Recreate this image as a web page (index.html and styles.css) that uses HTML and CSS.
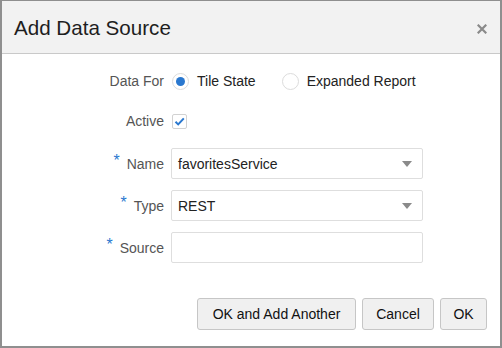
FILE: index.html
```html
<!DOCTYPE html>
<html lang="en">
<head>
    <meta charset="UTF-8">
    <title>Add Data Source</title>
    <link rel="stylesheet" href="styles.css">
</head>
<body>
    <div class="dialog">
        <div class="dialog-header">
            <h1>Add Data Source</h1>
            <span class="close-btn">
                <svg width="10" height="10" viewBox="0 0 10 10"><path d="M1.5 1.5 L8.5 8.5 M8.5 1.5 L1.5 8.5" stroke="#8a8a8a" stroke-width="2.2" stroke-linecap="square"/></svg>
            </span>
        </div>

        <div class="dialog-body">
            <div class="form">
                <label class="label">Data For</label>
                <div class="radios">
                    <span class="radio checked"></span>
                    <span class="value">Tile State</span>
                    <span class="radio second"></span>
                    <span class="value">Expanded Report</span>
                </div>

                <label class="label active-label">Active</label>
                <div class="control">
                    <span class="checkbox">
                        <svg width="13" height="13" viewBox="0 0 13 13"><path d="M2.5 6.8 L5.2 9.4 L10.8 3.4" fill="none" stroke="#2a78cf" stroke-width="2"/></svg>
                    </span>
                </div>

                <label class="label"><span class="req">*</span> Name</label>
                <div class="field select">favoritesService<span class="caret"></span></div>

                <label class="label"><span class="req">*</span> Type</label>
                <div class="field select">REST<span class="caret"></span></div>

                <label class="label"><span class="req">*</span> Source</label>
                <div class="field"></div>
            </div>
        </div>

        <div class="dialog-footer">
            <button class="btn wide">OK and Add Another</button>
            <button class="btn cancel">Cancel</button>
            <button class="btn ok">OK</button>
        </div>
    </div>
</body>
</html>
```

FILE: styles.css
```css
html, body {
    margin: 0;
    padding: 0;
}
body {
    font-family: "Liberation Sans", Arial, sans-serif;
    font-size: 14px;
    color: #333;
    background: #fff;
}
.dialog {
    box-sizing: border-box;
    width: 502px;
    height: 348px;
    border: 2px solid #8f8f8f;
    border-top-width: 1px;
    display: flex;
    flex-direction: column;
    background: #fff;
}
.dialog-header {
    height: 52px;
    background: #f2f2f2;
    border-bottom: 1px solid #c9c9c9;
    display: flex;
    align-items: center;
    justify-content: space-between;
    padding: 0 13px 0 12px;
}
.dialog-header h1 {
    margin: 0;
    margin-top: 2px;
    font-size: 20.6px;
    font-weight: normal;
    color: #1e1e1e;
}
.close-btn {
    display: flex;
    margin-top: 3px;
}
.dialog-body {
    padding-top: 12px;
}
.form {
    display: grid;
    grid-template-columns: 162px 252px;
    grid-template-rows: 30px 30px 31px 31px 31px;
    column-gap: 7px;
    row-gap: 11px;
}
.label {
    display: flex;
    align-items: center;
    justify-content: flex-end;
    color: #555;
}
.active-label, .control {
    padding-bottom: 2px;
}
.req {
    color: #2a78cf;
    font-size: 16px;
    margin-right: 7px;
    position: relative;
    top: -3px;
}
.radios {
    display: flex;
    align-items: center;
    white-space: nowrap;
}
.radio {
    box-sizing: border-box;
    width: 17px;
    height: 17px;
    border: 1px solid #dcdcdc;
    border-radius: 50%;
    display: flex;
    align-items: center;
    justify-content: center;
    margin-left: 1px;
    margin-right: 8px;
}
.radio.checked::after {
    content: "";
    width: 9px;
    height: 9px;
    border-radius: 50%;
    background: #2a78cf;
}
.radio.second {
    margin-left: 26px;
}
.value {
    color: #222;
}
.control {
    display: flex;
    align-items: center;
}
.checkbox {
    box-sizing: border-box;
    width: 15px;
    height: 15px;
    border: 1px solid #d2d2d2;
    border-radius: 2px;
    display: flex;
    align-items: center;
    justify-content: center;
    margin-left: 1px;
}
.field {
    box-sizing: border-box;
    border: 1px solid #dedede;
    border-radius: 2px;
    display: flex;
    align-items: center;
    justify-content: space-between;
    padding: 0 10px 0 6px;
    color: #222;
}
.caret {
    width: 0;
    height: 0;
    border-left: 5px solid transparent;
    border-right: 5px solid transparent;
    border-top: 6px solid #8a8a8a;
}
.dialog-footer {
    margin-top: auto;
    display: flex;
    justify-content: flex-end;
    gap: 6px;
    padding: 0 13px 16px 0;
}
.btn {
    font-family: inherit;
    font-size: 14px;
    color: #111;
    height: 32px;
    background: #f0f0f0;
    border: 1px solid #c6c6c6;
    border-radius: 3px;
    padding: 0;
    cursor: pointer;
}
.btn.wide {
    width: 159px;
}
.btn.cancel {
    width: 72px;
}
.btn.ok {
    width: 47px;
}
```
